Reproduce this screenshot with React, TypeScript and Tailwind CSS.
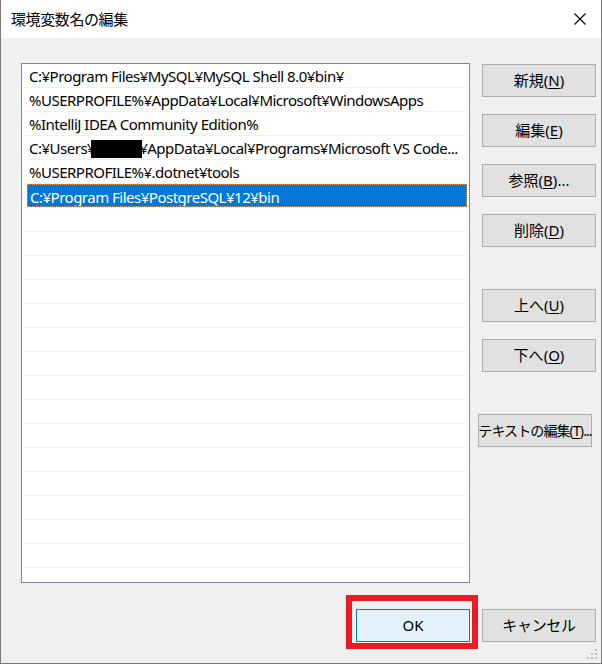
import React from "react";

const rows: { text: React.ReactNode; selected?: boolean }[] = [
  { text: "C:¥Program Files¥MySQL¥MySQL Shell 8.0¥bin¥" },
  { text: "%USERPROFILE%¥AppData¥Local¥Microsoft¥WindowsApps" },
  { text: "%IntelliJ IDEA Community Edition%" },
  {
    text: (
      <>
        C:¥Users¥
        <span className="inline-block w-[51px] h-[18px] bg-black align-[-4px] ml-[-4px] mr-[-3px]" />
        ¥AppData¥Local¥Programs¥Microsoft VS Code...
      </>
    ),
  },
  { text: "%USERPROFILE%¥.dotnet¥tools" },
  { text: "C:¥Program Files¥PostgreSQL¥12¥bin", selected: true },
];

function Btn({
  label,
  mn,
  suffix = "",
  className = "",
}: {
  label: string;
  mn: string;
  suffix?: string;
  className?: string;
}) {
  return (
    <div
      className={
        "h-[33px] w-[114px] flex items-center justify-center bg-[#e1e1e1] border border-[#adadad] text-black whitespace-nowrap " +
        className
      }
    >
      <span>
        {label}(<span className="underline underline-offset-2">{mn}</span>){suffix}
      </span>
    </div>
  );
}

export default function App() {
  const allRows = [...rows];
  while (allRows.length < 22) allRows.push({ text: "" });
  return (
    <div className="relative w-[602px] h-[664px] flex flex-col bg-[#f0f0f0] border-l border-r border-b border-[#7a7a7a] font-['Noto_Sans','Noto_Sans_CJK_JP',sans-serif] overflow-hidden">
      {/* title bar */}
      <div className="h-[38px] shrink-0 bg-white flex items-center justify-between pl-[10px] pr-[15px]">
        <span className="text-[15px] text-black tracking-[-0.4px] font-['Noto_Sans_CJK_JP',sans-serif]">
          環境変数名の編集
        </span>
        <svg width="12" height="12" viewBox="0 0 12 12" className="mt-[-1px]">
          <path d="M0.5 0.5 L11.5 11.5 M11.5 0.5 L0.5 11.5" stroke="#000" strokeWidth="1.1" />
        </svg>
      </div>

      {/* body */}
      <div className="flex-1 flex flex-col pl-[20px] pr-[5px] pt-[25px]">
        <div className="flex gap-[12px]">
          {/* list */}
          <div className="w-[449px] h-[520px] border border-[#828790] bg-white overflow-hidden">
            {allRows.map((r, i) => (
              <div key={i} className="mx-[2px] h-[24px] border-b border-[#f0f0f0]">
                <div
                  className={
                    "h-[23px] ml-[3px] pl-[2px] pt-[1px] text-[15px] tracking-[-0.5px] leading-[23px] whitespace-nowrap overflow-hidden " +
                    (r.selected
                      ? "bg-[#0078d7] text-white border border-dotted border-[#d8a060] leading-[21px] pl-[1px] pt-0"
                      : "text-black")
                  }
                >
                  {r.text}
                </div>
              </div>
            ))}
          </div>
          {/* right buttons */}
          <div className="flex flex-col mt-[1px] text-[15px]">
            <Btn label="新規" mn="N" />
            <Btn label="編集" mn="E" className="mt-[17px]" />
            <Btn label="参照" mn="B" suffix="..." className="mt-[17px]" />
            <Btn label="削除" mn="D" className="mt-[17px]" />
            <Btn label="上へ" mn="U" className="mt-[42px]" />
            <Btn label="下へ" mn="O" className="mt-[17px]" />
            <Btn label="テキストの編集" mn="T" suffix="..." className="mt-[42px] ml-[-4px] text-[14px] tracking-[-0.9px]" />
          </div>
        </div>

        {/* bottom buttons */}
        <div className="flex justify-end gap-[12px] mt-[26px]">
          <div className="h-[33px] w-[114px] flex items-center justify-center bg-[#e5f1fb] border border-[#0078d7] text-[15px] text-black">
            OK
          </div>
          <div className="h-[33px] w-[114px] flex items-center justify-center bg-[#e1e1e1] border border-[#adadad] text-[15px] text-black tracking-[-0.3px]">
            キャンセル
          </div>
        </div>
      </div>

      {/* red annotation */}
      <div className="absolute left-[345px] top-[595px] w-[132px] h-[54px] border-[6px] border-[#ed1c24]" />

      {/* resize grip */}
      <svg className="absolute right-[3px] bottom-[3px]" width="11" height="11" viewBox="0 0 11 11">
        <rect x="8" y="0" width="2" height="2" fill="#bdbdbd" />
        <rect x="4" y="4" width="2" height="2" fill="#bdbdbd" />
        <rect x="8" y="4" width="2" height="2" fill="#bdbdbd" />
        <rect x="0" y="8" width="2" height="2" fill="#bdbdbd" />
        <rect x="4" y="8" width="2" height="2" fill="#bdbdbd" />
        <rect x="8" y="8" width="2" height="2" fill="#bdbdbd" />
      </svg>
    </div>
  );
}
